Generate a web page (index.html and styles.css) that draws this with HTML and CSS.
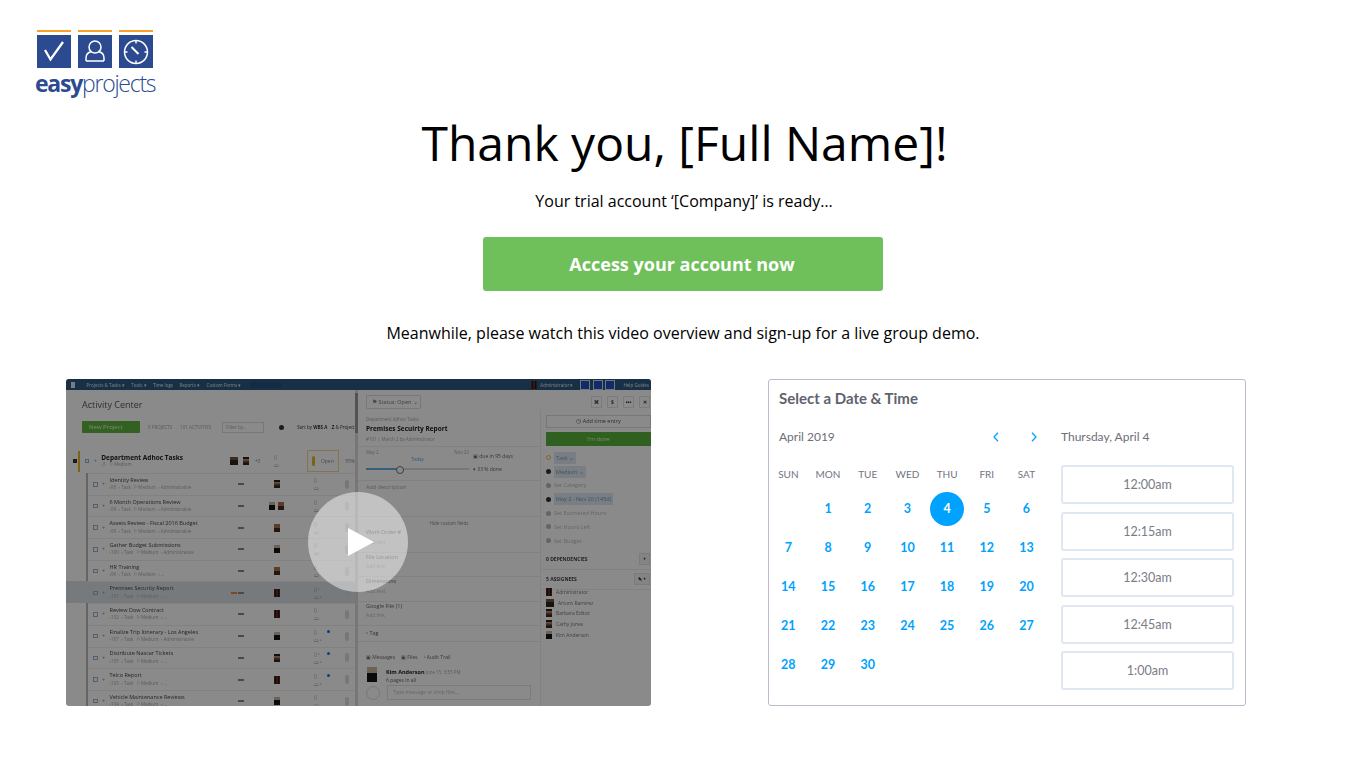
FILE: index.html
```html
<!DOCTYPE html>
<html lang="en">
<head>
    <meta charset="UTF-8">
    <meta name="viewport" content="width=device-width, initial-scale=1.0">
    <title>Easy Projects - Thank you</title>
    <link rel="stylesheet" href="styles.css">
</head>
<body>
    <header class="logo">
        <div class="logo-icons">
            <div class="logo-tile">
                <svg width="34" height="33" viewBox="0 0 34 33"><path d="M8 15l5.500 9.500L26 7" fill="none" stroke="#fff" stroke-width="2.300"/></svg>
            </div>
            <div class="logo-tile">
                <svg width="34" height="33" viewBox="0 0 34 33"><circle cx="17" cy="12" r="6" fill="none" stroke="#fff" stroke-width="1.500"/><path d="M8 26v-3c0-4 3-6 6-6.500M26 26v-3c0-4-3-6-6-6.500M8 26h18" fill="none" stroke="#fff" stroke-width="1.500"/></svg>
            </div>
            <div class="logo-tile">
                <svg width="34" height="33" viewBox="0 0 34 33"><circle cx="17" cy="17" r="11.500" fill="none" stroke="#fff" stroke-width="1.500"/><path d="M17 5.500v3M17 25.500v3M5.500 17h3M25.500 17h3" stroke="#fff" stroke-width="1.400"/><path d="M12.500 12l7 7" stroke="#fff" stroke-width="2"/></svg>
            </div>
        </div>
        <div class="logo-name"><b>easy</b>projects</div>
    </header>

    <main class="thanks">
        <h1>Thank you, [Full Name]!</h1>
        <p class="ready">Your trial account ‘[Company]’ is ready…</p>
        <a class="access-btn" href="#">Access your account now</a>
        <p class="meanwhile">Meanwhile, please watch this video overview and sign-up for a live group demo.</p>
    </main>

    <section class="media">
        <div class="video">
            <div class="app">
                <div class="app-bar">
                    <span class="bar-home"></span>
                    <span>Projects &amp; Tasks ▾</span>
                    <span>Tools ▾</span>
                    <span>Time logs</span>
                    <span>Reports ▾</span>
                    <span>Custom Forms ▾</span>
                    <span class="bar-search"></span>
                    <span class="bar-right"><i class="av av-e"></i>Administrator ▾</span>
                    <span class="bar-tile"></span>
                    <span class="bar-tile"></span>
                    <span class="bar-tile"></span>
                    <span class="bar-help">Help Guides</span>
                </div>
                <div class="app-body">
                    <div class="activity">
                        <div class="activity-title">Activity Center</div>
                        <div class="activity-tools">
                            <span class="new-project">New Project</span>
                            <span class="muted">8 PROJECTS</span>
                            <span class="muted">101 ACTIVITIES</span>
                            <span class="filter">Filter by...</span>
                            <span class="gear"></span>
                            <span class="sort">Sort by <b>WBS A→Z</b> &amp; Project</span>
                        </div>
                        <div class="dept">
                            <span class="dept-arrow"></span>
                            <span class="dept-bar"></span>
                            <span class="chk"></span><span class="plus">+</span>
                            <div class="task-text">
                                <b>Department Adhoc Tasks</b>
                                <small>▫5 &nbsp; ⚐ Medium</small>
                            </div>
                            <i class="av av-b dept-av"></i><i class="av av-c"></i><span class="dept-more">+3</span>
                            <span class="task-icons">▯<br>▭</span>
                            <span class="dept-open"><i class="thermo"></i>Open</span>
                            <span class="dept-pct">55%</span>
                        </div>
                        <div class="tasks">
                            <div class="task"><span class="chk"></span><span class="plus">+</span><div class="task-text"><span>Identity Review</span><small>▫95 &nbsp;▫ Task &nbsp;⚐ Medium &nbsp;▫ Administrative</small></div><span class="dash"></span><span class="task-av"><i class="av av-c"></i></span><span class="task-icons">▯<br>▭</span><span class="task-user"></span></div>
                            <div class="task"><span class="chk"></span><span class="plus">+</span><div class="task-text"><span>6 Month Operations Review</span><small>▫98 &nbsp;▫ Task &nbsp;⚐ Medium &nbsp;▫ Administrative</small></div><span class="dash"></span><span class="task-av"><i class="av av-d"></i><i class="av av-a"></i></span><span class="task-icons">▯<br>▭</span><span class="task-user"></span></div>
                            <div class="task"><span class="chk"></span><span class="plus">+</span><div class="task-text"><span>Assets Review - Fiscal 2016 Budget</span><small>▫99 &nbsp;▫ Task &nbsp;⚐ Medium &nbsp;▫ Administrative</small></div><span class="dash"></span><span class="task-av"><i class="av av-a"></i></span><span class="task-icons">▯<br>▭</span><span class="task-user"></span></div>
                            <div class="task"><span class="chk"></span><span class="plus">+</span><div class="task-text"><span>Gather Budget Submissions</span><small>▫100 &nbsp;▫ Task &nbsp;⚐ Medium &nbsp;▫ Administrative</small></div><span class="dash"></span><span class="task-av"><i class="av av-d"></i></span><span class="task-icons">▯<br>▭</span><span class="task-user"></span></div>
                            <div class="task"><span class="chk"></span><span class="plus">+</span><div class="task-text"><span>HR Training</span><small>▫96 &nbsp;▫ Task &nbsp;⚐ Medium &nbsp;▫ ...</small></div><span class="dash"></span><span class="task-av"><i class="av av-a"></i></span><span class="task-icons">▯<br>▭</span><span class="task-user"></span></div>
                            <div class="task task-on"><span class="chk"></span><span class="plus">+</span><div class="task-text"><span>Premises Security Report</span><small>▫101 &nbsp;▫ Task &nbsp;⚐ Medium &nbsp;▫ ...</small></div><span class="dash dash-hot"></span><span class="task-av"><i class="av av-e"></i></span><span class="task-icons">▯ ▫<br>▭ ▫</span><span class="task-user"></span></div>
                            <div class="task"><span class="chk"></span><span class="plus">+</span><div class="task-text"><span>Review Dow Contract</span><small>▫102 &nbsp;▫ Task &nbsp;⚐ Medium &nbsp;▫ ...</small></div><span class="dash"></span><span class="task-av"><i class="av av-e"></i></span><span class="task-icons">▯<br>▭</span><span class="task-user"></span></div>
                            <div class="task"><span class="chk"></span><span class="plus">+</span><div class="task-text"><span>Finalize Trip Itinerary - Los Angeles</span><small>▫107 &nbsp;▫ Task &nbsp;⚐ Medium &nbsp;▫ Administrative</small></div><span class="dash"></span><span class="task-av"><i class="av av-d"></i></span><span class="task-icons">▯<br>▭ ▫<i class="dot"></i></span><span class="task-user"></span></div>
                            <div class="task"><span class="chk"></span><span class="plus">+</span><div class="task-text"><span>Distribute Nascar Tickets</span><small>▫105 &nbsp;▫ Task &nbsp;⚐ Medium &nbsp;▫ ...</small></div><span class="dash"></span><span class="task-av"><i class="av av-c"></i></span><span class="task-icons">▯ ▫<br>▭ ▫<i class="dot"></i></span><span class="task-user"></span></div>
                            <div class="task"><span class="chk"></span><span class="plus">+</span><div class="task-text"><span>Telco Report</span><small>▫103 &nbsp;▫ Task &nbsp;⚐ Medium &nbsp;▫ ...</small></div><span class="dash"></span><span class="task-av"><i class="av av-e"></i></span><span class="task-icons">▯<br>▭ ▫<i class="dot"></i></span><span class="task-user"></span></div>
                            <div class="task"><span class="chk"></span><span class="plus">+</span><div class="task-text"><span>Vehicle Maintenance Reviews</span><small>▫104 &nbsp;▫ Task &nbsp;⚐ Medium &nbsp;▫ ...</small></div><span class="dash"></span><span class="task-av"><i class="av av-d"></i></span><span class="task-icons">▯<br>▭</span><span class="task-user"></span></div>
                        </div>
                    </div>
                    <div class="scrollbar"><span></span></div>
                    <div class="detail">
                        <div class="detail-top">
                            <span class="status">⚑ Status: Open ⌄</span>
                            <span class="top-btns"><i>⌘</i><i>$</i><i>•••</i><i>✕</i></span>
                        </div>
                        <div class="detail-cols">
                            <div class="detail-main">
                                <div class="info">
                                    <small>Department Adhoc Tasks</small>
                                    <b>Premises Secuirty Report</b>
                                    <small>#101 | March 2 by Administrator</small>
                                </div>
                                <div class="schedule">
                                    <div class="dates"><span>May 2</span><span>Nov 20</span></div>
                                    <div class="today">Today</div>
                                    <div class="slider"><span></span></div>
                                    <div class="sched-note sched-due">▣ due in 95 days</div>
                                    <div class="sched-note sched-done">▾ 33 % done</div>
                                </div>
                                <div class="desc">Add description</div>
                                <div class="hide-fields">Hide custom fields</div>
                                <div class="field"><span>Work Order #</span><small>Add text</small></div>
                                <div class="field"><span>File Location</span><small>Add link</small></div>
                                <div class="field"><span>Dimensions</span><small>Add text</small></div>
                                <div class="field"><span>Google File (1)</span><small>Add link</small></div>
                                <div class="tag">▫ Tag</div>
                                <div class="tabs"><span>▣ Messages</span><span>▣ Files</span><span>▫ Audit Trail</span></div>
                                <div class="message">
                                    <i class="av av-d msg-av"></i>
                                    <div><b>Kim Anderson</b> <small>June 15, 3:53 PM</small><br>6 pages in all</div>
                                </div>
                                <div class="reply">
                                    <span class="clip"></span>
                                    <span class="reply-box">Type message or drop files...</span>
                                </div>
                            </div>
                            <div class="detail-side">
                                <div class="side-btn">◷ Add time entry</div>
                                <div class="side-done">I'm done</div>
                                <ul class="props">
                                    <li><i class="prop-ico prop-task"></i><span class="chip">Task ⌄</span></li>
                                    <li><i class="prop-ico prop-dark"></i><span class="chip">Medium ⌄</span></li>
                                    <li><i class="prop-ico"></i>Set Category</li>
                                    <li><i class="prop-ico prop-dark"></i><span class="chip">May 2 - Nov 20 (145d)</span></li>
                                    <li><i class="prop-ico"></i>Set Estimated Hours</li>
                                    <li><i class="prop-ico"></i>Set Hours Left</li>
                                    <li><i class="prop-ico"></i>Set Budget</li>
                                </ul>
                                <div class="side-head side-deps"><b>0 DEPENDENCIES</b><span>+</span></div>
                                <div class="side-head"><b>5 ASSIGNEES</b><span>✎ +</span></div>
                                <ul class="people">
                                    <li><i class="av av-e"></i>Administrator</li>
                                    <li><i class="av av-b"></i>Arturo Ramirez</li>
                                    <li><i class="av av-c"></i>Barbara Editor</li>
                                    <li><i class="av av-c"></i>Cathy Jones</li>
                                    <li><i class="av av-d"></i>Kim Anderson</li>
                                </ul>
                            </div>
                        </div>
                    </div>
                </div>
            </div>
            <div class="video-shade"></div>
            <div class="play"><svg width="26" height="28" viewBox="0 0 26 28"><path d="M0 0l26 14L0 28z" fill="#fff"/></svg></div>
        </div>

        <div class="booking">
            <h2>Select a Date &amp; Time</h2>
            <div class="booking-cols">
                <div class="cal">
                    <div class="cal-head">
                        <span>April 2019</span>
                        <span class="cal-nav">
                            <svg width="8" height="10" viewBox="0 0 8 10"><path d="M6 .8L2 5l4 4.200" fill="none" stroke="#00a2ff" stroke-width="1.300"/></svg>
                            <svg width="8" height="10" viewBox="0 0 8 10"><path d="M2 .8L6 5 2 9.200" fill="none" stroke="#00a2ff" stroke-width="1.300"/></svg>
                        </span>
                    </div>
                    <div class="cal-week">
                        <span>SUN</span><span>MON</span><span>TUE</span><span>WED</span><span>THU</span><span>FRI</span><span>SAT</span>
                    </div>
                    <div class="cal-days">
                        <span></span><span>1</span><span>2</span><span>3</span><span class="day-on">4</span><span>5</span><span>6</span>
                        <span>7</span><span>8</span><span>9</span><span>10</span><span>11</span><span>12</span><span>13</span>
                        <span>14</span><span>15</span><span>16</span><span>17</span><span>18</span><span>19</span><span>20</span>
                        <span>21</span><span>22</span><span>23</span><span>24</span><span>25</span><span>26</span><span>27</span>
                        <span>28</span><span>29</span><span>30</span>
                    </div>
                </div>
                <div class="slots">
                    <div class="slots-day">Thursday, April 4</div>
                    <div class="slot">12:00am</div>
                    <div class="slot">12:15am</div>
                    <div class="slot">12:30am</div>
                    <div class="slot">12:45am</div>
                    <div class="slot">1:00am</div>
                </div>
            </div>
        </div>
    </section>
</body>
</html>
```

FILE: styles.css
```css
* {
    box-sizing: border-box;
}
body {
    margin: 0;
    background: #fff;
    color: #000;
    font-family: "Open Sans", sans-serif;
}

/* logo */
.logo {
    height: 113px;
    padding: 30px 0 0 35px;
}
.logo-icons {
    display: flex;
    gap: 7px;
    padding-left: 2px;
}
.logo-tile {
    width: 34px;
    height: 38px;
    border-top: 2.5px solid #f7a12c;
    padding-top: 2.5px;
}
.logo-tile svg {
    display: block;
    background: #2c4a90;
}
.logo-name {
    margin-top: 2px;
    font-size: 23px;
    line-height: 27px;
    font-weight: 300;
    letter-spacing: -1.25px;
    color: #2c4a90;
}
.logo-name b {
    font-weight: 700;
}

/* heading block */
.thanks {
    text-align: center;
}
.thanks h1 {
    margin: 0;
    font-size: 48px;
    line-height: 60px;
    font-weight: 400;
    padding-left: 3px;
}
.ready {
    margin: 17px 0 0;
    padding-left: 2px;
    font-size: 16px;
    line-height: 22px;
}
.access-btn {
    display: block;
    width: 400px;
    height: 54px;
    margin: 25px auto 0;
    padding-right: 2px;
    border-radius: 3px;
    background: #6fbf5b;
    color: #fff;
    font-size: 18px;
    font-weight: 700;
    line-height: 54px;
    text-decoration: none;
}
.meanwhile {
    margin: 31px 0 0;
    font-size: 16px;
    line-height: 22px;
}

/* two columns */
.media {
    display: flex;
    align-items: flex-start;
    gap: 117px;
    margin-top: 35px;
    padding-left: 66px;
}

/* video poster */
.video {
    position: relative;
    width: 585px;
    height: 327px;
    overflow: hidden;
    border-radius: 3px;
}
.video-shade {
    position: absolute;
    inset: 0;
    background: rgba(0, 0, 0, 0.46);
}
.play {
    position: absolute;
    left: 242px;
    top: 113px;
    width: 100px;
    height: 100px;
    border-radius: 50%;
    background: rgba(255, 255, 255, 0.48);
    display: flex;
    align-items: center;
    justify-content: center;
    padding-left: 6px;
}
.app {
    height: 100%;
    display: flex;
    flex-direction: column;
    background: #fff;
    color: #333;
    font-size: 6px;
    filter: blur(0.75px);
}
.app-bar {
    height: 11px;
    flex: none;
    display: flex;
    align-items: center;
    gap: 6.5px;
    padding: 0 2px 0 5px;
    background: #2d5a80;
    color: #dfe8f0;
    font-size: 4.5px;
    white-space: nowrap;
}
.bar-home {
    width: 4px;
    height: 6px;
    margin-right: 5px;
    background: #dfe8f0;
}
.bar-search {
    width: 32px;
    height: 6px;
    border-radius: 3px;
    background: #24507c;
    margin-left: 2px;
}
.bar-right {
    display: flex;
    align-items: center;
    gap: 3px;
    margin-left: auto;
}
.bar-tile {
    width: 10px;
    height: 10px;
    margin-right: -4px;
    background: #1f50c0;
    border: 1px solid #cfdcec;
}
.bar-help {
    margin-left: 6px;
}
.av {
    display: inline-block;
    flex: none;
    width: 6px;
    height: 8px;
    background: #222;
}
.av-a { background: linear-gradient(#a9744f 45%, #4a2a1a 45%); }
.av-b { background: linear-gradient(#70503a 40%, #2b2320 40%); width: 8px; }
.av-c { background: linear-gradient(#2a1c16 30%, #c49272 30%, #3a2620 75%); }
.av-d { background: linear-gradient(#c9b59c 40%, #141414 40%); }
.av-e { background: linear-gradient(90deg, #6d3320, #111 30%, #8a4a30 50%, #111 70%, #6d3320); }
.app-body {
    flex: 1;
    display: flex;
    min-height: 0;
}

/* left pane */
.activity {
    width: 289px;
    flex: none;
    padding-top: 7px;
    overflow: hidden;
}
.activity-title {
    height: 16px;
    padding-left: 16px;
    font-size: 9px;
    line-height: 16px;
    color: #555;
}
.activity-tools {
    display: flex;
    align-items: center;
    gap: 8px;
    height: 12px;
    margin-top: 8px;
    padding-left: 16px;
    white-space: nowrap;
    font-size: 4.5px;
}
.new-project {
    width: 58px;
    height: 12px;
    padding-left: 7px;
    background: #5db43d;
    color: #e8f6e0;
    font-size: 6px;
    line-height: 12px;
    border-radius: 1px;
}
.muted {
    color: #aaa;
}
.filter {
    width: 42px;
    height: 11px;
    margin-left: 3px;
    padding-left: 3px;
    border: 1px solid #ddd;
    line-height: 9px;
    color: #aaa;
}
.gear {
    width: 5px;
    height: 5px;
    margin: 0 5px 0 7px;
    border-radius: 50%;
    background: #333;
}
.sort b {
    font-weight: 700;
}
.dept {
    display: flex;
    align-items: center;
    height: 22px;
    margin: 17px 0 0 7px;
}
.dept-arrow {
    width: 4px;
    height: 4px;
    margin-right: 1px;
    background: #333;
}
.dept-bar {
    width: 2px;
    height: 21px;
    margin-right: 5px;
    background: #e8b923;
}
.dept .task-text {
    width: 129px;
}
.dept .task-text b {
    display: block;
    font-size: 6.5px;
    color: #222;
}
.dept-av {
    margin-right: 5px;
}
.dept-more {
    width: 13px;
    margin-left: 2px;
    color: #888;
    font-size: 4.5px;
    text-align: center;
}
.dept .task-icons {
    margin-left: 10px;
    width: 20px;
}
.dept-open {
    display: flex;
    align-items: center;
    gap: 6px;
    width: 33px;
    height: 22px;
    margin-left: 13px;
    padding-left: 4px;
    border: 1px solid #f0d98c;
    color: #888;
    font-size: 5px;
}
.thermo {
    width: 3px;
    height: 10px;
    border-radius: 2px;
    background: #e8b923;
}
.dept-pct {
    margin-left: 6px;
    color: #888;
    font-size: 5px;
}
.tasks {
    margin: 1px 0 0 20px;
    border-left: 2px solid #bbb;
}
.task {
    display: flex;
    align-items: center;
    height: 21.7px;
    border-top: 1px solid #eee;
    padding-left: 5px;
}
.task-on {
    background: #dde2e8;
    box-shadow: -22px 0 0 #dde2e8;
}
.chk {
    width: 4.5px;
    height: 4.5px;
    flex: none;
    border: 0.7px solid #8db4d8;
}
.plus {
    width: 12px;
    flex: none;
    color: #999;
    font-size: 6px;
    text-align: center;
}
.task-text {
    width: 128px;
    flex: none;
    white-space: nowrap;
    font-size: 5.5px;
    line-height: 7.5px;
    color: #444;
}
.task-text small {
    display: block;
    font-size: 4.5px;
    color: #aaa;
}
.dash {
    width: 6px;
    height: 2px;
    margin: 0 23px 0 0;
    background: #888;
    flex: none;
}
.dash-hot {
    box-shadow: -7px 0 0 #f0803c;
}
.task-av {
    display: flex;
    justify-content: center;
    gap: 3px;
    width: 20px;
    flex: none;
}
.task-icons {
    position: relative;
    width: 31px;
    flex: none;
    margin-left: 27px;
    color: #888;
    font-size: 5px;
    line-height: 8px;
}
.dot {
    position: absolute;
    left: 13px;
    top: 2px;
    width: 3px;
    height: 3px;
    border-radius: 50%;
    background: #1d6fe0;
}
.task-user {
    width: 4px;
    height: 9px;
    border-radius: 2px;
    background: #ddd;
}

.scrollbar {
    width: 3px;
    flex: none;
    background: #ddd;
}
.scrollbar span {
    display: block;
    height: 40px;
    margin-top: 3px;
    background: #999;
}

/* right pane */
.detail {
    flex: 1;
    min-width: 0;
    display: flex;
    flex-direction: column;
}
.detail-top {
    display: flex;
    justify-content: space-between;
    align-items: center;
    height: 20px;
    padding: 4px 1px 0 8px;
}
.status {
    width: 55px;
    height: 14px;
    padding-left: 5px;
    border: 1px solid #ddd;
    border-radius: 1px;
    line-height: 12px;
    color: #777;
    font-size: 5.5px;
}
.top-btns {
    display: flex;
    gap: 5px;
}
.top-btns i {
    width: 11px;
    height: 12px;
    border: 1px solid #e4e4e4;
    font-size: 5px;
    font-style: normal;
    font-weight: 700;
    line-height: 10px;
    text-align: center;
}
.detail-cols {
    flex: 1;
    display: flex;
    min-height: 0;
}
.detail-main {
    width: 182px;
    flex: none;
    color: #666;
    font-size: 6px;
}
.info {
    height: 37px;
    padding: 5px 8px 0;
    border-bottom: 1px solid #eee;
}
.info small {
    display: block;
    font-size: 4.5px;
    line-height: 8px;
    color: #aaa;
}
.info b {
    display: block;
    font-size: 6.5px;
    line-height: 12px;
    color: #222;
}
.schedule {
    position: relative;
    height: 34px;
    padding: 2px 8px 0;
    border-bottom: 1px solid #eee;
}
.dates {
    display: flex;
    justify-content: space-between;
    width: 103px;
    color: #aaa;
    font-size: 4.5px;
    line-height: 7px;
}
.today {
    width: 103px;
    text-align: center;
    color: #5ca4d8;
    font-size: 4.5px;
    line-height: 6px;
}
.slider {
    width: 103px;
    height: 2px;
    margin-top: 6px;
    background: #ddd;
}
.slider span {
    display: block;
    position: relative;
    width: 35px;
    height: 2px;
    background: #62b0e4;
}
.slider span::after {
    content: "";
    position: absolute;
    right: -3px;
    top: -2px;
    width: 6px;
    height: 6px;
    border: 1px solid #777;
    border-radius: 50%;
    background: #fff;
}
.sched-note {
    position: absolute;
    left: 115px;
    font-size: 5px;
    white-space: nowrap;
}
.sched-due { top: 6px; }
.sched-done { top: 19px; }
.desc {
    height: 36px;
    padding: 2px 8px 0;
    border-bottom: 1px solid #eee;
    color: #aaa;
    font-size: 5.5px;
}
.hide-fields {
    height: 11px;
    text-align: center;
    color: #888;
    font-size: 4.5px;
    line-height: 12px;
}
.field {
    height: 24.5px;
    padding: 0 8px;
    border-bottom: 1px solid #eee;
    line-height: 9.5px;
}
.field span {
    display: block;
    font-size: 5.5px;
    color: #666;
}
.field small {
    display: block;
    font-size: 5px;
    color: #bbb;
}
.tag {
    height: 15px;
    padding: 3px 8px 0;
    font-size: 5.5px;
}
.tabs {
    display: flex;
    gap: 6px;
    height: 20px;
    padding: 12px 8px 0;
    border-top: 1px solid #eee;
    font-size: 5px;
}
.message {
    display: flex;
    gap: 9px;
    margin-top: 7px;
    padding-left: 9px;
    font-size: 5px;
    line-height: 8px;
}
.message b {
    font-size: 5.5px;
    color: #222;
}
.message small {
    font-size: 4.5px;
    color: #aaa;
}
.msg-av {
    width: 10px;
    height: 15px;
    margin-top: -1px;
}
.reply {
    display: flex;
    gap: 7px;
    align-items: center;
    margin-top: 1px;
    padding-left: 8px;
}
.clip {
    width: 14px;
    height: 14px;
    border: 1px solid #ddd;
    border-radius: 50%;
}
.reply-box {
    width: 144px;
    height: 15px;
    padding-left: 5px;
    border: 1px solid #e4e4e4;
    color: #bbb;
    font-size: 5px;
    line-height: 13px;
}
.detail-side {
    flex: 1;
    min-width: 0;
    padding-top: 5px;
    border-left: 1px solid #eee;
    font-size: 5.5px;
}
.side-btn {
    height: 13px;
    margin-left: 5px;
    border: 1px solid #ddd;
    text-align: center;
    line-height: 11px;
    color: #555;
}
.side-done {
    height: 14px;
    margin: 4px 0 0 5px;
    background: #58b23c;
    text-align: center;
    line-height: 14px;
    color: #dff2d8;
}
.props {
    list-style: none;
    margin: 5px 0 0;
    padding: 0;
}
.props li,
.people li {
    display: flex;
    align-items: center;
    height: 13.8px;
    padding-left: 5px;
    color: #bbb;
    white-space: nowrap;
}
.prop-ico {
    width: 5px;
    height: 5px;
    margin-right: 3px;
    border-radius: 50%;
    background: #bbb;
}
.prop-dark {
    background: #333;
}
.prop-task {
    background: none;
    border: 1px solid #f0c040;
}
.chip {
    padding: 2px;
    background: #dfe9f4;
    color: #7d94ad;
}
.side-head {
    display: flex;
    justify-content: space-between;
    align-items: center;
    height: 20px;
    padding: 0 1px 0 5px;
    color: #444;
    font-size: 5px;
    border-bottom: 1px solid #eee;
}
.side-head span {
    padding: 0 3px;
    border: 1px solid #e4e4e4;
    background: #f4f4f4;
    color: #222;
    line-height: 10px;
    font-weight: 700;
}
.side-deps {
    margin-top: 2px;
}
.people {
    list-style: none;
    margin: -3px 0 0;
    padding: 0;
}
.people li {
    height: 10.7px;
    gap: 4px;
    color: #777;
    font-size: 5px;
}

/* calendar card */
.booking {
    width: 478px;
    height: 327px;
    padding: 9px 11px 0 10px;
    border: 1px solid #babccb;
    border-radius: 3px;
    font-family: Lato, sans-serif;
}
.booking h2 {
    margin: 0;
    color: #60636f;
    font-size: 15px;
    font-weight: 700;
    line-height: 18px;
}
.booking-cols {
    display: flex;
    margin-top: 21px;
}
.cal {
    width: 272px;
    flex: none;
}
.cal-head {
    display: flex;
    justify-content: space-between;
    align-items: center;
    height: 17px;
    color: #6c6e78;
    font-size: 12px;
}
.cal-nav {
    display: flex;
    gap: 30px;
    margin-right: 13px;
}
.cal-week,
.cal-days {
    display: grid;
    grid-template-columns: repeat(7, 39.7px);
    margin-left: -10.5px;
    text-align: center;
}
.cal-week {
    margin-top: 21px;
    color: #71747f;
    font-size: 10px;
    line-height: 16px;
}
.cal-days {
    grid-auto-rows: 39px;
    margin-top: 7px;
    color: #00a2ff;
    font-size: 12.5px;
    font-weight: 700;
}
.cal-days span {
    display: flex;
    align-items: center;
    justify-content: center;
}
.day-on {
    justify-self: center;
    align-self: center;
    width: 34px;
    height: 34px;
    border-radius: 50%;
    background: #00a2ff;
    color: #fff;
}
.slots {
    width: 173px;
    flex: none;
    margin-left: 10px;
}
.slots-day {
    height: 18px;
    margin-bottom: 19px;
    color: #6c6e78;
    font-size: 12px;
    line-height: 18px;
}
.slot {
    height: 39px;
    margin-bottom: 7.5px;
    border: 2px solid #dfe8f2;
    border-radius: 3px;
    color: #7a7c86;
    font-size: 12.5px;
    line-height: 35px;
    text-align: center;
}
```
